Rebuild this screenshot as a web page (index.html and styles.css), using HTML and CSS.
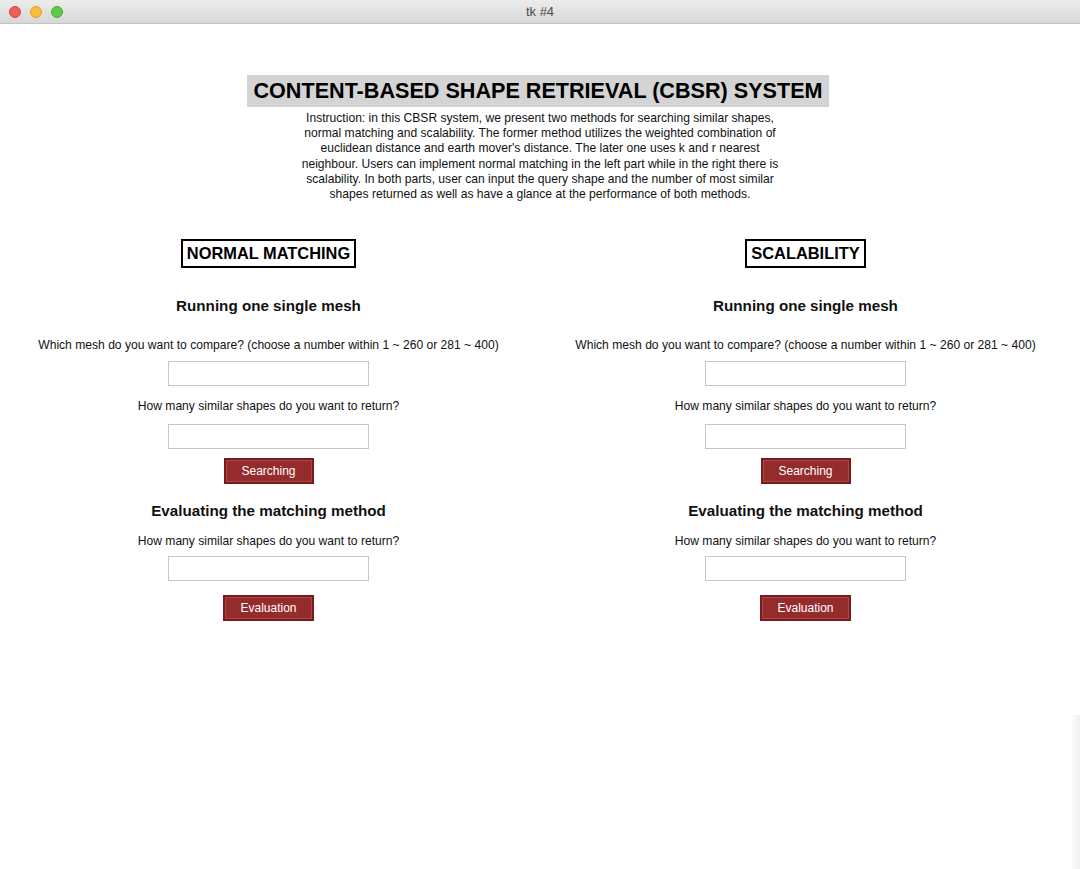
FILE: index.html
```html
<!DOCTYPE html>
<html>
<head>
<meta charset="utf-8">
<title>tk #4</title>
<link rel="stylesheet" href="styles.css">
</head>
<body>
<div class="window">
  <div class="titlebar">
    <div class="lights">
      <span class="light red"></span>
      <span class="light yellow"></span>
      <span class="light green"></span>
    </div>
    <div class="wtitle">tk #4</div>
  </div>
  <main class="content">
    <h1 class="heading">CONTENT-BASED SHAPE RETRIEVAL (CBSR) SYSTEM</h1>
    <p class="instr">Instruction: in this CBSR system, we present two methods for searching similar shapes,<br>normal matching and scalability. The former method utilizes the weighted combination of<br>euclidean distance and earth mover's distance. The later one uses k and r nearest<br>neighbour. Users can implement normal matching in the left part while in the right there is<br>scalability. In both parts, user can input the query shape and the number of most similar<br>shapes returned as well as have a glance at the performance of both methods.</p>
    <div class="columns">
      <section class="col">
        <div class="colhead">NORMAL MATCHING</div>
        <h2 class="sub sub-run">Running one single mesh</h2>
        <p class="label l-which">Which mesh do you want to compare? (choose a number within 1 ~ 260 or 281 ~ 400)</p>
        <input class="field f1" type="text">
        <p class="label l-how">How many similar shapes do you want to return?</p>
        <input class="field f2" type="text">
        <button class="btn b-search">Searching</button>
        <h2 class="sub sub-eval">Evaluating the matching method</h2>
        <p class="label l-how2">How many similar shapes do you want to return?</p>
        <input class="field f3" type="text">
        <button class="btn b-eval">Evaluation</button>
      </section>
      <section class="col">
        <div class="colhead">SCALABILITY</div>
        <h2 class="sub sub-run">Running one single mesh</h2>
        <p class="label l-which">Which mesh do you want to compare? (choose a number within 1 ~ 260 or 281 ~ 400)</p>
        <input class="field f1" type="text">
        <p class="label l-how">How many similar shapes do you want to return?</p>
        <input class="field f2" type="text">
        <button class="btn b-search">Searching</button>
        <h2 class="sub sub-eval">Evaluating the matching method</h2>
        <p class="label l-how2">How many similar shapes do you want to return?</p>
        <input class="field f3" type="text">
        <button class="btn b-eval">Evaluation</button>
      </section>
    </div>
  </main>
  <div class="edge-shadow"></div>
</div>
</body>
</html>
```

FILE: styles.css
```css
* { box-sizing: border-box; }
html, body {
  margin: 0;
  padding: 0;
  background: #ffffff;
}
body {
  font-family: "Liberation Sans", Arial, sans-serif;
  color: #111;
}
.window {
  position: relative;
  width: 1080px;
  height: 869px;
  overflow: hidden;
  background: #fff;
}
.titlebar {
  position: relative;
  height: 24px;
  background: linear-gradient(#ececec, #d7d7d7);
  border-bottom: 1px solid #c4c4c4;
  display: flex;
  align-items: center;
  justify-content: center;
}
.lights {
  position: absolute;
  left: 9px;
  top: 6px;
  display: flex;
  gap: 9px;
}
.light {
  width: 12px;
  height: 12px;
  border-radius: 50%;
  display: block;
}
.red { background: #ee5d57; border: 1px solid #d9463f; }
.yellow { background: #f6be3b; border: 1px solid #dca12a; }
.green { background: #5fc84a; border: 1px solid #48ad36; }
.wtitle {
  font-family: "Liberation Sans", Arial, sans-serif;
  font-size: 13px;
  color: #4a4a4a;
}
.content {
  display: flex;
  flex-direction: column;
  align-items: center;
  padding-top: 51px;
}
.heading {
  margin: 0 4px 0 0;
  background: #d4d4d4;
  height: 32px;
  line-height: 32px;
  padding: 0 6px;
  font-size: 21.6px;
  font-weight: bold;
  color: #000;
  letter-spacing: 0;
}
.instr {
  margin: 4px 0 0;
  text-align: center;
  font-size: 12.1px;
  line-height: 15.2px;
  color: #111;
}
.columns {
  width: 100%;
  display: grid;
  grid-template-columns: 537px 537px;
  margin-top: 37px;
}
.col {
  display: flex;
  flex-direction: column;
  align-items: center;
}
.colhead {
  border: 2px solid #000;
  height: 29px;
  line-height: 25px;
  padding: 0 4px;
  font-size: 16.4px;
  font-weight: bold;
  color: #000;
}
.sub {
  margin: 0;
  font-size: 15.2px;
  font-weight: bold;
  line-height: 18px;
  color: #111;
}
.sub-run { margin-top: 29px; }
.label {
  margin: 0;
  font-size: 12.1px;
  line-height: 15px;
  white-space: nowrap;
}
.l-which { margin-top: 23px; }
.field {
  display: block;
  width: 201px;
  height: 25px;
  border: 1px solid #c6c6c6;
  background: #fff;
  padding: 0;
  outline: none;
}
.f1 { margin-top: 8px; }
.l-how { margin-top: 13px; }
.f2 { margin-top: 10px; }
.btn {
  display: block;
  width: 90px;
  height: 26px;
  margin: 0;
  padding: 0;
  background: #952c2c;
  border: 2px solid #761b1b;
  box-shadow: inset 0 0 0 1px #ad4545;
  color: #fff;
  font-family: "Liberation Sans", Arial, sans-serif;
  font-size: 12px;
  line-height: 22px;
  text-align: center;
  cursor: pointer;
}
.b-search { margin-top: 9px; }
.sub-eval { margin-top: 18px; }
.l-how2 { margin-top: 14px; }
.f3 { margin-top: 7px; }
.b-eval { margin-top: 14px; width: 91px; }
.edge-shadow {
  position: absolute;
  right: 0;
  top: 715px;
  width: 10px;
  height: 154px;
  background: linear-gradient(to right, rgba(0,0,0,0), rgba(0,0,0,0.06));
}
```
